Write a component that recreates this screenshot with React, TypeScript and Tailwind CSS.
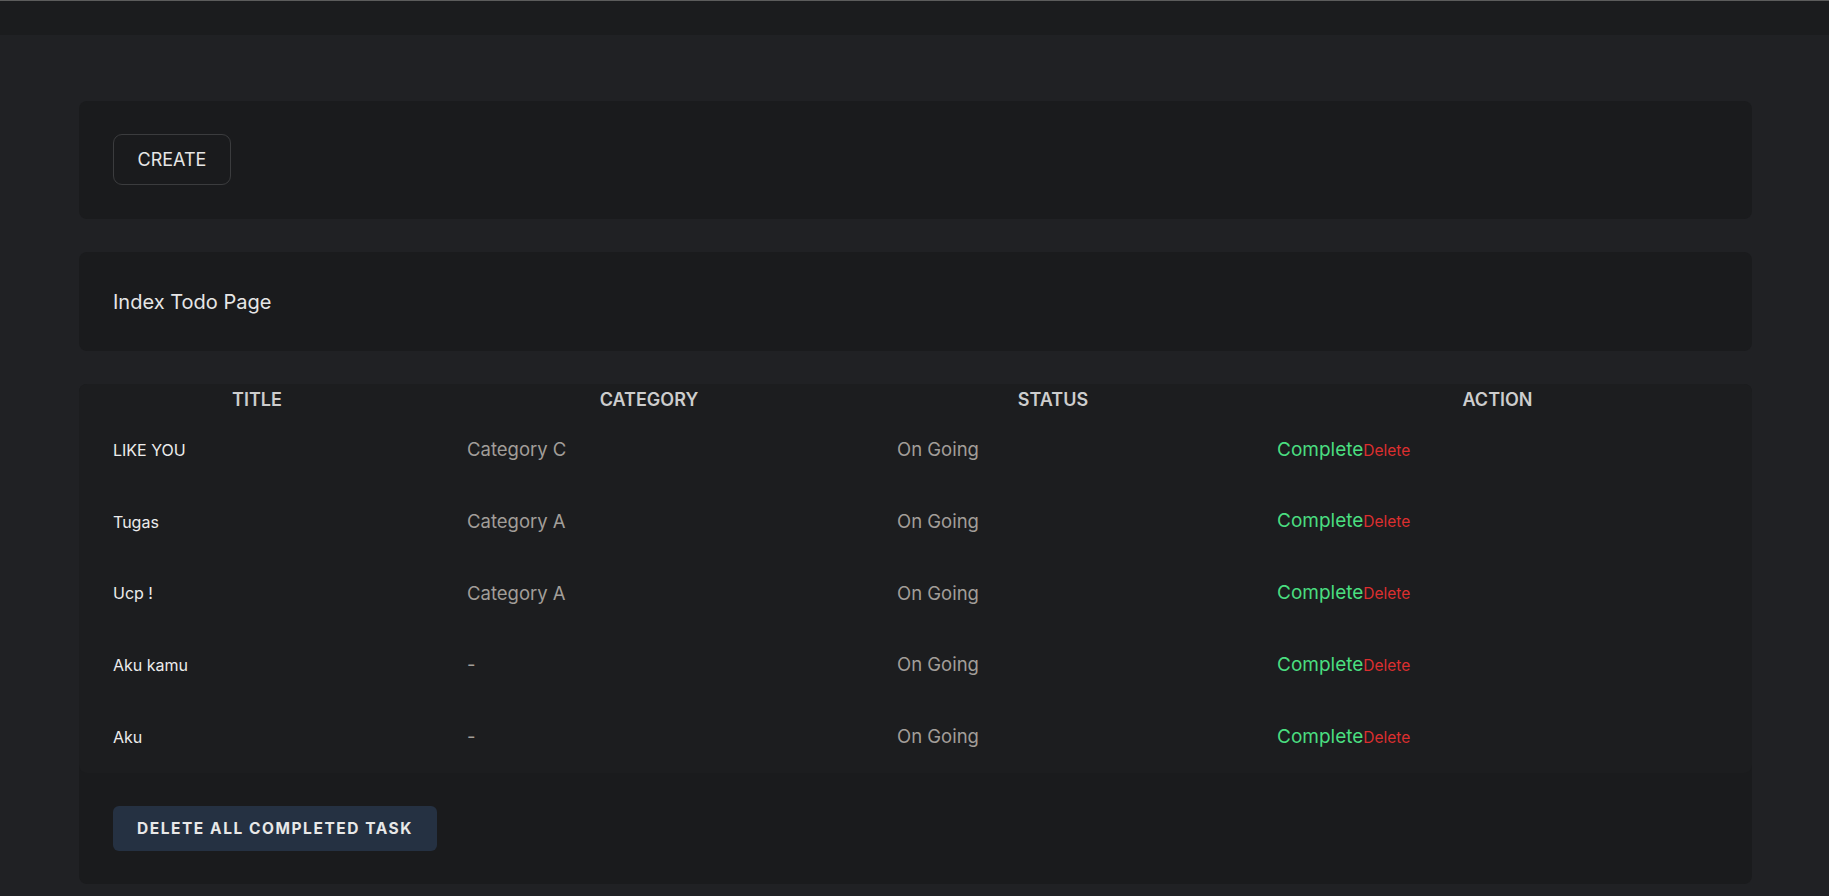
import React from 'react';

interface Todo {
  title: string;
  category: string;
  status: string;
}

const todos: Todo[] = [
  { title: 'LIKE YOU', category: 'Category C', status: 'On Going' },
  { title: 'Tugas', category: 'Category A', status: 'On Going' },
  { title: 'Ucp !', category: 'Category A', status: 'On Going' },
  { title: 'Aku kamu', category: '-', status: 'On Going' },
  { title: 'Aku', category: '-', status: 'On Going' },
];

const cols = 'grid grid-cols-[356px_428px_380px_1fr]';

export default function App() {
  return (
    <div className="min-h-screen bg-[#202124] font-['Inter','Liberation_Sans',sans-serif]">
      {/* top bar */}
      <div className="h-[35px] border-t border-[#5c5c5c] bg-[#1b1c1e]" />

      <main className="flex flex-col gap-[33px] pl-[79px] pr-[77px] pt-[66px] pb-[13px]">
        <section className="flex h-[118px] items-start rounded-lg bg-[#1a1b1d] px-[34px] pt-[33px]">
          <button className="flex h-[51px] w-[118px] items-center justify-center rounded-[9px] border border-[#3b3c3e] text-[18px] text-[#e6e6e6]">
            CREATE
          </button>
        </section>

        <section className="flex h-[99px] items-center rounded-lg bg-[#1a1b1d] px-[34px]">
          <h1 className="text-[20px] text-[#e6e6e6]">Index Todo Page</h1>
        </section>

        <section className="rounded-lg bg-[#1a1b1d]">
          <div className="rounded-lg bg-[#1c1d1f]">
            <div className={`${cols} h-[30px] items-center text-center text-[18px] font-semibold text-[#cdcdcd]`}>
              <div>TITLE</div>
              <div>CATEGORY</div>
              <div>STATUS</div>
              <div>ACTION</div>
            </div>
            {todos.map((todo) => (
              <div key={todo.title} className={`${cols} h-[71.8px] items-center`}>
                <div className="px-[34px] text-[16px] text-[#ececec]">{todo.title}</div>
                <div className="px-[32px] text-[18.5px] text-[#a29e99]">{todo.category}</div>
                <div className="px-[34px] text-[18.5px] text-[#a29e99]">{todo.status}</div>
                <div className="flex items-baseline px-[34px]">
                  <button className="text-[19px] text-[#4ade80]">Complete</button>
                  <button className="text-[15.5px] text-[#dc2f2f]">Delete</button>
                </div>
              </div>
            ))}
          </div>
          <div className="px-[34px] pt-[33px] pb-[33px]">
            <button className="flex h-[45px] w-[324px] items-center justify-center rounded-md bg-[#253142] text-[15.5px] font-bold tracking-widest text-[#e8e8e8]">
              DELETE ALL COMPLETED TASK
            </button>
          </div>
        </section>
      </main>
    </div>
  );
}
